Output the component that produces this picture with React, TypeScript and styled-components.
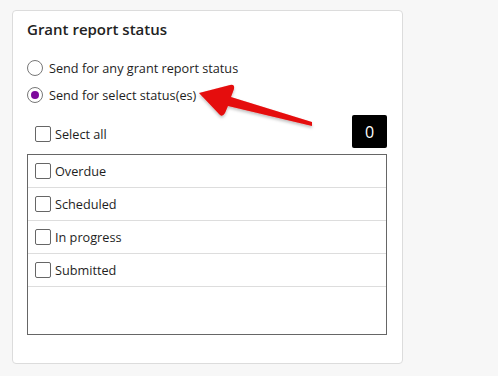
import React from 'react';
import styled, { createGlobalStyle } from 'styled-components';

const GlobalStyle = createGlobalStyle`
  html, body {
    margin: 0;
    padding: 0;
    background: #f7f7f7;
    font-family: 'Open Sans', 'Noto Sans', sans-serif;
    color: #222;
  }
`;

const statuses = ['Overdue', 'Scheduled', 'In progress', 'Submitted'];

const App = () => {
  return (
    <>
      <GlobalStyle />
      <Page>
        <Card>
          <Title>Grant report status</Title>
          <RadioGroup>
            <RadioRow>
              <Radio checked={false} />
              <Label>Send for any grant report status</Label>
            </RadioRow>
            <RadioRow>
              <Radio checked />
              <Label>Send for select status(es)</Label>
            </RadioRow>
          </RadioGroup>

          <SelectAllRow>
            <CheckRow>
              <Check />
              <Label>Select all</Label>
            </CheckRow>
            <Badge>0</Badge>
          </SelectAllRow>

          <ListBox>
            {statuses.map((s) => (
              <ListItem key={s}>
                <Check />
                <Label>{s}</Label>
              </ListItem>
            ))}
          </ListBox>

          <Arrow viewBox="0 0 498 376" width="498" height="376">
            <defs>
              <filter id="shadow" x="-10%" y="-10%" width="130%" height="140%">
                <feDropShadow dx="0" dy="2" stdDeviation="1.5" floodColor="#000" floodOpacity="0.25" />
              </filter>
            </defs>
            <path
              d="M199 93 L230 85 Q235 84 234 89 L231 97 L312 122 L312 126 L228 106 L225 113 Q222 118 219 114 Z"
              fill="#e50a0a"
              filter="url(#shadow)"
            />
          </Arrow>
        </Card>
      </Page>
    </>
  );
};

export default App;

const Page = styled.div`
  width: 498px;
  height: 376px;
  padding: 10px 0 0 12px;
  box-sizing: border-box;
`;

const Card = styled.div`
  position: relative;
  width: 391px;
  height: 354px;
  box-sizing: border-box;
  background: #fff;
  border: 1px solid #dcdcdc;
  border-radius: 4px;
  padding: 7px 15px 0 14px;
`;

const Title = styled.h2`
  margin: 0;
  font-size: 15px;
  line-height: 22px;
  font-weight: 600;
  color: #222;
`;

const RadioGroup = styled.div`
  display: flex;
  flex-direction: column;
  gap: 11px;
  margin-top: 20px;
`;

const RadioRow = styled.div`
  display: flex;
  align-items: center;
  gap: 6px;
  height: 16px;
`;

const Radio = styled.span<{ checked: boolean }>`
  width: 16px;
  height: 16px;
  box-sizing: border-box;
  border: 1px solid #777;
  border-radius: 50%;
  display: flex;
  align-items: center;
  justify-content: center;
  background: #fff;

  &::after {
    content: '';
    display: ${(p) => (p.checked ? 'block' : 'none')};
    width: 8px;
    height: 8px;
    border-radius: 50%;
    background: #7d0a9c;
  }
`;

const Label = styled.span`
  font-size: 12.7px;
  line-height: 18px;
  color: #1e1e1e;
`;

const SelectAllRow = styled.div`
  display: flex;
  align-items: center;
  justify-content: space-between;
  margin-top: 12px;
  padding-left: 8px;
`;

const CheckRow = styled.div`
  display: flex;
  align-items: center;
  gap: 4px;
  margin-top: 5px;
`;

const Check = styled.span`
  width: 16px;
  height: 16px;
  box-sizing: border-box;
  border: 1px solid #666;
  border-radius: 2px;
  background: #fff;
  flex: none;
`;

const Badge = styled.div`
  width: 35px;
  height: 33px;
  background: #000;
  color: #fff;
  border-radius: 2px;
  display: flex;
  align-items: center;
  justify-content: center;
  font-size: 16px;
`;

const ListBox = styled.div`
  margin-top: 6px;
  height: 181px;
  box-sizing: border-box;
  border: 1px solid #666;
`;

const ListItem = styled.div`
  display: flex;
  align-items: center;
  gap: 4px;
  height: 33px;
  box-sizing: border-box;
  padding-left: 7px;
  border-bottom: 1px solid #ddd;
`;

const Arrow = styled.svg`
  position: absolute;
  left: -13px;
  top: -11px;
  pointer-events: none;
`;
